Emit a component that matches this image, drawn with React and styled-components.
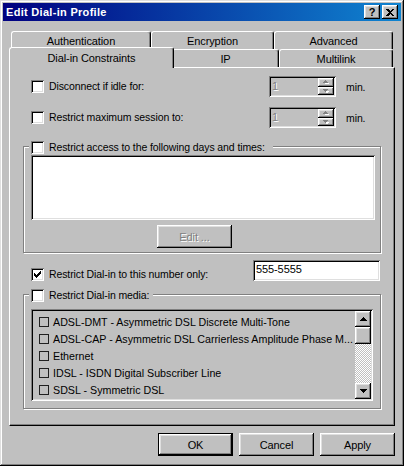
import React from 'react';
import styled, { createGlobalStyle, css } from 'styled-components';

const FACE = '#c0c0c0';
const SHADOW = '#808080';
const DARK = '#000000';
const LIGHT = '#dfdfdf';

const GlobalStyle = createGlobalStyle`
  html, body {
    margin: 0;
    padding: 0;
    background: ${FACE};
  }
  body {
    font-family: "Liberation Sans", Arial, sans-serif;
    font-size: 10.5px;
    letter-spacing: -0.1px;
    color: #000;
  }
`;

const raised = css`
  box-shadow: inset -1px -1px ${DARK}, inset 1px 1px #fff,
    inset -2px -2px ${SHADOW}, inset 2px 2px ${LIGHT};
`;

const sunken = css`
  box-shadow: inset 1px 1px ${SHADOW}, inset -1px -1px #fff,
    inset 2px 2px ${DARK}, inset -2px -2px ${LIGHT};
`;

const disabledText = css`
  color: ${SHADOW};
  text-shadow: 1px 1px #fff;
`;

const Window = styled.div`
  width: 404px;
  height: 466px;
  box-sizing: border-box;
  padding: 3px;
  background: ${FACE};
  box-shadow: inset -1px -1px ${DARK}, inset 1px 1px ${LIGHT},
    inset -2px -2px ${SHADOW}, inset 2px 2px #fff;
  display: flex;
  flex-direction: column;
`;

const TitleBar = styled.div`
  height: 18px;
  display: flex;
  align-items: center;
  padding: 0 3px 0 3px;
  background: linear-gradient(to right, #000080, #1084d0);
`;

const Title = styled.span`
  flex: 1;
  color: #fff;
  font-weight: bold;
  font-size: 11px;
  letter-spacing: 0.3px;
`;

const TitleButton = styled.div`
  width: 16px;
  height: 14px;
  box-sizing: border-box;
  background: ${FACE};
  ${raised};
  margin-left: ${({ $gap }) => $gap || 0}px;
  display: flex;
  align-items: center;
  justify-content: center;
  font-weight: bold;
  font-size: 11px;
  line-height: 14px;
`;

const Body = styled.div`
  padding: 10px 6px 0 6px;
  display: flex;
  flex-direction: column;
`;

const TabRow = styled.div`
  display: flex;
  align-items: flex-start;
  height: 18px;
  padding-left: 2px;
`;

const Tab = styled.div`
  width: ${({ $w }) => $w}px;
  height: 18px;
  box-sizing: border-box;
  flex: none;
  border-top: 1px solid #fff;
  border-left: 1px solid #fff;
  border-right: 1px solid ${DARK};
  border-radius: 3px 3px 0 0;
  box-shadow: inset -1px 0 ${SHADOW};
  background: ${FACE};
  display: flex;
  align-items: center;
  justify-content: center;
  padding-top: 1px;
  font-size: 11px;

  ${({ $active, $w }) =>
    $active &&
    css`
      width: ${$w + 4}px;
      height: 21px;
      margin: -2px -2px 0 -2px;
      padding-top: 0;
      position: relative;
      z-index: 1;
    `}
`;

const Panel = styled.div`
  height: 359px;
  box-sizing: border-box;
  border-top: 1px solid #fff;
  border-left: 1px solid #fff;
  border-right: 1px solid ${DARK};
  border-bottom: 1px solid ${DARK};
  box-shadow: inset -1px -1px ${SHADOW};
  padding: 8px 13px 0 13px;
  display: flex;
  flex-direction: column;
`;

const OptionRow = styled.div`
  height: 21px;
  display: flex;
  align-items: ${({ $align }) => $align || 'center'};
  padding-left: 8px;
  margin-top: ${({ $mt }) => $mt || 0}px;
`;

const CheckBox = styled.div`
  width: 13px;
  height: 13px;
  flex: none;
  box-sizing: border-box;
  background: #fff;
  ${sunken};
  display: flex;
  align-items: center;
  justify-content: center;
`;

const Label = styled.span`
  flex: 1;
  margin-left: 5px;
  white-space: nowrap;
  line-height: 13px;
`;

const SpinBox = styled.div`
  width: 67px;
  height: 21px;
  box-sizing: border-box;
  padding: 2px;
  background: ${FACE};
  ${sunken};
  display: flex;
`;

const SpinValue = styled.span`
  flex: 1;
  padding-left: 1px;
  line-height: 17px;
  font-size: 11px;
  ${disabledText};
`;

const SpinButtons = styled.div`
  width: 16px;
  display: flex;
  flex-direction: column;
`;

const SpinButton = styled.div`
  flex: 1;
  background: ${FACE};
  ${raised};
  display: flex;
  align-items: center;
  justify-content: center;
`;

const Unit = styled.span`
  width: 45px;
  padding-left: 10px;
  box-sizing: border-box;
  flex: none;
`;

const GroupBox = styled.div`
  margin-top: ${({ $mt }) => $mt}px;
  border: 1px solid ${SHADOW};
  box-shadow: inset 1px 1px #fff, 1px 1px #fff;
  padding: 0 0 ${({ $pb }) => $pb}px 7px;
  display: flex;
  flex-direction: column;
  align-items: flex-start;
`;

const Legend = styled.div`
  height: 13px;
  display: flex;
  align-items: center;
  margin: -6px 0 0 -2px;
  padding: 0 ${({ $padR }) => $padR}px 0 2px;
  background: ${FACE};
`;

const TimeList = styled.div`
  margin-top: 1px;
  width: 344px;
  height: 65px;
  box-sizing: border-box;
  background: #fff;
  ${sunken};
`;

const Button = styled.div`
  width: 75px;
  height: 23px;
  box-sizing: border-box;
  flex: none;
  background: ${FACE};
  ${raised};
  display: flex;
  align-items: center;
  justify-content: center;
  font-size: 11px;
  margin-top: ${({ $mt }) => $mt || 0}px;
  margin-left: ${({ $ml }) => $ml || 0}px;
  ${({ $disabled }) => $disabled && disabledText};
  ${({ $default }) =>
    $default &&
    css`
      box-shadow: inset 0 0 0 1px ${DARK}, inset -2px -2px ${DARK},
        inset 2px 2px #fff, inset -3px -3px ${SHADOW}, inset 3px 3px ${LIGHT};
    `}
`;

const TextBox = styled.div`
  width: 127px;
  height: 21px;
  box-sizing: border-box;
  flex: none;
  margin-right: 1px;
  padding: 2px 0 0 3px;
  line-height: 15px;
  font-size: 11px;
  background: #fff;
  ${sunken};
`;

const MediaList = styled.div`
  margin-top: 7px;
  width: 342px;
  height: 92px;
  box-sizing: border-box;
  padding: 2px;
  background: ${FACE};
  ${sunken};
  display: flex;
`;

const Items = styled.div`
  flex: 1;
  min-width: 0;
  padding: 2px 0 0 6px;
  display: flex;
  flex-direction: column;
`;

const Item = styled.div`
  height: 17px;
  display: flex;
  align-items: center;
  white-space: nowrap;
  overflow: hidden;
  font-size: 10.7px;
  letter-spacing: 0;
`;

const SmallCheck = styled.span`
  width: 10px;
  height: 10px;
  box-sizing: border-box;
  border: 1px solid #202020;
  flex: none;
  margin-right: 4px;
`;

const ScrollBar = styled.div`
  width: 16px;
  display: flex;
  flex-direction: column;
`;

const ScrollButton = styled.div`
  height: ${({ $h }) => $h}px;
  flex: none;
  background: ${FACE};
  ${raised};
  display: flex;
  align-items: center;
  justify-content: center;
`;

const ScrollTrack = styled.div`
  flex: 1;
  background: repeating-conic-gradient(#fff 0 25%, ${FACE} 0 50%) 0 0 / 2px 2px;
`;

const ButtonRow = styled.div`
  display: flex;
  justify-content: flex-end;
  gap: 6px;
  margin-top: 7px;
`;

const Check = () => (
  <svg width="7" height="7" viewBox="0 0 7 7" shapeRendering="crispEdges">
    <path d="M0 2h1v1h1v1h1v-1h1v-1h1v-1h1v-1h1v3h-1v1h-1v1h-1v1h-1v1h-1v-1h-1v-1h-1z" fill="#000" />
  </svg>
);

const CloseGlyph = () => (
  <svg width="8" height="7" viewBox="0 0 8 7" shapeRendering="crispEdges">
    <path d="M0 0h2l2 2 2-2h2l-3 3.5 3 3.5h-2l-2-2-2 2h-2l3-3.5z" fill="#000" />
  </svg>
);

const Arrow = ({ down, color = '#000' }) => (
  <svg width="7" height="4" viewBox="0 0 7 4" shapeRendering="crispEdges">
    <path
      d={down ? 'M0 0h7v1h-1v1h-1v1h-1v1h-1v-1h-1v-1h-1v-1h-1z' : 'M3 0h1v1h1v1h1v1h1v1h-7v-1h1v-1h1v-1h1z'}
      fill={color}
    />
  </svg>
);

const TinyArrow = ({ down }) => (
  <svg width="6" height="4" viewBox="0 0 6 4" shapeRendering="crispEdges">
    <path
      d={down ? 'M1 1h4v1h-1v1h-2v-1h-1z' : 'M2 1h2v1h1v1h-4v-1h1z'}
      fill="#fff"
      transform="translate(1 1)"
    />
    <path d={down ? 'M0 0h5v1h-1v1h-1v1h-1v-1h-1v-1h-1z' : 'M2 0h1v1h1v1h1v1h-5v-1h1v-1h1z'} fill={SHADOW} />
  </svg>
);

const Spin = () => (
  <SpinBox>
    <SpinValue>1</SpinValue>
    <SpinButtons>
      <SpinButton>
        <TinyArrow />
      </SpinButton>
      <SpinButton>
        <TinyArrow down />
      </SpinButton>
    </SpinButtons>
  </SpinBox>
);

const backTabs = [
  ['Authentication', 140],
  ['Encryption', 123],
  ['Advanced', 119],
];

const frontTabs = [
  ['Dial-in Constraints', 161, true],
  ['IP', 107],
  ['Multilink', 114],
];

const media = [
  'ADSL-DMT - Asymmetric DSL Discrete Multi-Tone',
  'ADSL-CAP - Asymmetric DSL Carrierless Amplitude Phase M...',
  'Ethernet',
  'IDSL - ISDN Digital Subscriber Line',
  'SDSL - Symmetric DSL',
];

export default function App() {
  return (
    <>
      <GlobalStyle />
      <Window>
        <TitleBar>
          <Title>Edit Dial-in Profile</Title>
          <TitleButton>?</TitleButton>
          <TitleButton $gap={2}>
            <CloseGlyph />
          </TitleButton>
        </TitleBar>

        <Body>
          <TabRow>
            {backTabs.map(([name, w]) => (
              <Tab key={name} $w={w}>
                {name}
              </Tab>
            ))}
          </TabRow>
          <TabRow>
            {frontTabs.map(([name, w, active]) => (
              <Tab key={name} $w={w} $active={active}>
                {name}
              </Tab>
            ))}
          </TabRow>

          <Panel>
            <OptionRow>
              <CheckBox />
              <Label>Disconnect if idle for:</Label>
              <Spin />
              <Unit>min.</Unit>
            </OptionRow>
            <OptionRow $mt={10}>
              <CheckBox />
              <Label>Restrict maximum session to:</Label>
              <Spin />
              <Unit>min.</Unit>
            </OptionRow>

            <GroupBox $mt={18} $pb={4}>
              <Legend $padR={8}>
                <CheckBox />
                <Label>Restrict access to the following days and times:</Label>
              </Legend>
              <TimeList />
              <Button $mt={5} $ml={126} $disabled>
                Edit ...
              </Button>
            </GroupBox>

            <OptionRow $mt={7} $align="flex-end">
              <CheckBox>
                <Check />
              </CheckBox>
              <Label>Restrict Dial-in to this number only:</Label>
              <TextBox>555-5555</TextBox>
            </OptionRow>

            <GroupBox $mt={13} $pb={7}>
              <Legend $padR={4}>
                <CheckBox />
                <Label>Restrict Dial-in media:</Label>
              </Legend>
              <MediaList>
                <Items>
                  {media.map((m) => (
                    <Item key={m}>
                      <SmallCheck />
                      {m}
                    </Item>
                  ))}
                </Items>
                <ScrollBar>
                  <ScrollButton $h={16}>
                    <Arrow />
                  </ScrollButton>
                  <ScrollButton $h={17} />
                  <ScrollTrack />
                  <ScrollButton $h={16}>
                    <Arrow down />
                  </ScrollButton>
                </ScrollBar>
              </MediaList>
            </GroupBox>
          </Panel>

          <ButtonRow>
            <Button $default>OK</Button>
            <Button>Cancel</Button>
            <Button>Apply</Button>
          </ButtonRow>
        </Body>
      </Window>
    </>
  );
}
